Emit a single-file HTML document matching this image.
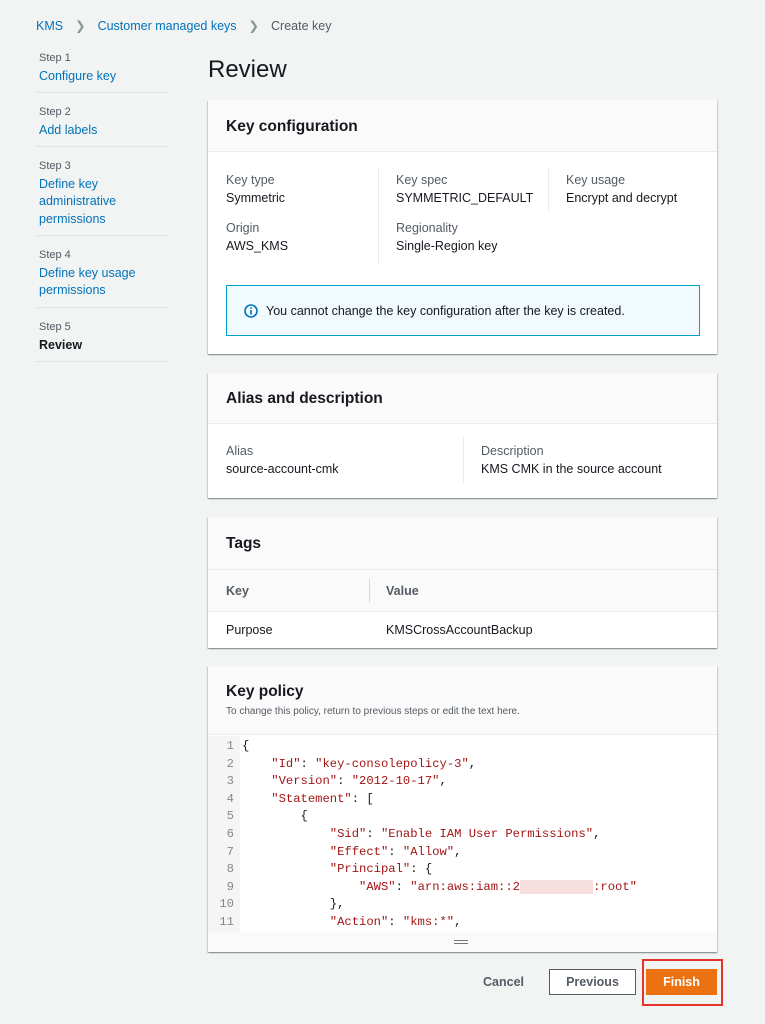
<!DOCTYPE html>
<html><head><style>
*{box-sizing:border-box;margin:0;padding:0}
body{width:765px;height:1024px;background:#f2f3f3;font-family:"Liberation Sans",Arial,sans-serif;color:#16191f;position:relative;overflow:hidden;font-size:12.5px}
.a{position:absolute}
.lnk{color:#0073bb}
.panel{position:absolute;left:208px;width:509px;background:#fff;box-shadow:0 1px 1px rgba(0,28,36,.3),1px 1px 1px rgba(0,28,36,.15),-1px 1px 1px rgba(0,28,36,.15)}
.hd{position:absolute;left:0;top:0;width:100%;background:#fafafa;border-bottom:1px solid #eaeded}
.hd h2{position:absolute;left:18px;font-size:15.5px;font-weight:bold}
.lbl{color:#545b64}
.sep{position:absolute;width:1px;background:#eaeded}
.code{font-family:"Liberation Mono",monospace;font-size:12.2px;line-height:17.6px;white-space:pre}
.s{color:#a31515}
.step{position:absolute;left:39px;font-size:12.5px;line-height:17.5px}
.step .n{color:#545b64;font-size:11px}
.hr{position:absolute;left:36px;width:132px;height:1px;background:#e2e4e4}
</style></head><body>
<div class="a" style="left:36px;top:18px;font-size:12.5px"><span class="lnk">KMS</span><span style="color:#879596;margin:0 12px">&#x276F;</span><span class="lnk">Customer managed keys</span><span style="color:#879596;margin:0 12px">&#x276F;</span><span style="color:#545b64">Create key</span></div>

<div class="step" style="top:50px"><div class="n">Step 1</div><div class="lnk">Configure key</div></div>
<div class="hr" style="top:92px"></div>
<div class="step" style="top:104px"><div class="n">Step 2</div><div class="lnk">Add labels</div></div>
<div class="hr" style="top:146px"></div>
<div class="step" style="top:158px"><div class="n">Step 3</div><div class="lnk">Define key<br>administrative<br>permissions</div></div>
<div class="hr" style="top:235px"></div>
<div class="step" style="top:247px"><div class="n">Step 4</div><div class="lnk">Define key usage<br>permissions</div></div>
<div class="hr" style="top:307px"></div>
<div class="step" style="top:319px"><div class="n">Step 5</div><div style="font-weight:bold;color:#16191f">Review</div></div>
<div class="hr" style="top:361px"></div>

<div class="a" style="left:208px;top:56px;font-size:24px">Review</div>

<div class="panel" style="top:100px;height:254px">
 <div class="hd" style="height:52px"><h2 style="top:18px">Key configuration</h2></div>
 <div class="a" style="left:18px;top:72px;line-height:17.5px"><div class="lbl">Key type</div><div>Symmetric</div></div>
 <div class="a" style="left:18px;top:120px;line-height:17.5px"><div class="lbl">Origin</div><div>AWS_KMS</div></div>
 <div class="sep" style="left:170px;top:68px;height:96px"></div>
 <div class="a" style="left:188px;top:72px;line-height:17.5px"><div class="lbl">Key spec</div><div>SYMMETRIC_DEFAULT</div></div>
 <div class="a" style="left:188px;top:120px;line-height:17.5px"><div class="lbl">Regionality</div><div>Single-Region key</div></div>
 <div class="sep" style="left:340px;top:68px;height:44px"></div>
 <div class="a" style="left:358px;top:72px;line-height:17.5px"><div class="lbl">Key usage</div><div>Encrypt and decrypt</div></div>
 <div class="a" style="left:18px;top:185px;width:474px;height:51px;background:#f1faff;border:1px solid #00a1c9"></div>
 <svg class="a" style="left:36px;top:204px" width="14" height="14" viewBox="0 0 14 14"><circle cx="7" cy="7" r="6" fill="none" stroke="#0073bb" stroke-width="1.6"/><rect x="6.2" y="6" width="1.6" height="4.5" fill="#0073bb"/><rect x="6.2" y="3.3" width="1.6" height="1.6" fill="#0073bb"/></svg>
 <div class="a" style="left:58px;top:204px">You cannot change the key configuration after the key is created.</div>
</div>

<div class="panel" style="top:373px;height:125px">
 <div class="hd" style="height:51px"><h2 style="top:17px">Alias and description</h2></div>
 <div class="a" style="left:18px;top:70px;line-height:17.5px"><div class="lbl">Alias</div><div>source-account-cmk</div></div>
 <div class="sep" style="left:255px;top:64px;height:46px"></div>
 <div class="a" style="left:273px;top:70px;line-height:17.5px"><div class="lbl">Description</div><div>KMS CMK in the source account</div></div>
</div>

<div class="panel" style="top:517px;height:131px">
 <div class="hd" style="height:52px;border-bottom:none"><h2 style="top:18px">Tags</h2></div>
 <div class="a" style="left:0;top:52px;width:509px;height:43px;background:#fafafa;border-top:1px solid #eaeded;border-bottom:1px solid #eaeded"></div>
 <div class="sep" style="left:161px;top:62px;height:24px;background:#d5dbdb"></div>
 <div class="a" style="left:18px;top:67px;font-weight:bold;color:#545b64">Key</div>
 <div class="a" style="left:178px;top:67px;font-weight:bold;color:#545b64">Value</div>
 <div class="a" style="left:18px;top:106px">Purpose</div>
 <div class="a" style="left:178px;top:106px">KMSCrossAccountBackup</div>
</div>

<div class="panel" style="top:666px;height:286px">
 <div class="hd" style="height:69px"><h2 style="top:17px">Key policy</h2><div class="a" style="left:18px;top:40px;font-size:10px;color:#545b64">To change this policy, return to previous steps or edit the text here.</div></div>
 <div class="a code" style="left:0;top:70px;width:32px;height:196px;background:#f5f5f5;color:#888;text-align:right;padding-right:6px;padding-top:2px">1
2
3
4
5
6
7
8
9
10
11</div>
 <div class="a code" style="left:34px;top:72px;height:194px;overflow:hidden">{
    <span class="s">"Id"</span>: <span class="s">"key-consolepolicy-3"</span>,
    <span class="s">"Version"</span>: <span class="s">"2012-10-17"</span>,
    <span class="s">"Statement"</span>: [
        {
            <span class="s">"Sid"</span>: <span class="s">"Enable IAM User Permissions"</span>,
            <span class="s">"Effect"</span>: <span class="s">"Allow"</span>,
            <span class="s">"Principal"</span>: {
                <span class="s">"AWS"</span>: <span class="s">"arn:aws:iam::2<span style="color:#f0c8c8;background:#f6dede">          </span>:root"</span>
            },
            <span class="s">"Action"</span>: <span class="s">"kms:*"</span>,</div>
 <div class="a" style="left:0;top:266px;width:509px;height:20px;background:#fafafa"></div>
 <div class="a" style="left:246px;top:274px;width:14px;height:4px;border-top:1px solid #777;border-bottom:1px solid #777"></div>
</div>

<div class="a" style="left:483px;top:975px;font-weight:bold;color:#545b64">Cancel</div>
<div class="a" style="left:549px;top:969px;width:87px;height:26px;background:#fff;border:1px solid #545b64;font-weight:bold;color:#545b64;text-align:center;line-height:24px">Previous</div>
<div class="a" style="left:642px;top:959px;width:81px;height:47px;border:2px solid #e5352b"></div>
<div class="a" style="left:646px;top:969px;width:71px;height:26px;background:#ec7211;font-weight:bold;color:#fff;text-align:center;line-height:26px">Finish</div>
</body></html>
